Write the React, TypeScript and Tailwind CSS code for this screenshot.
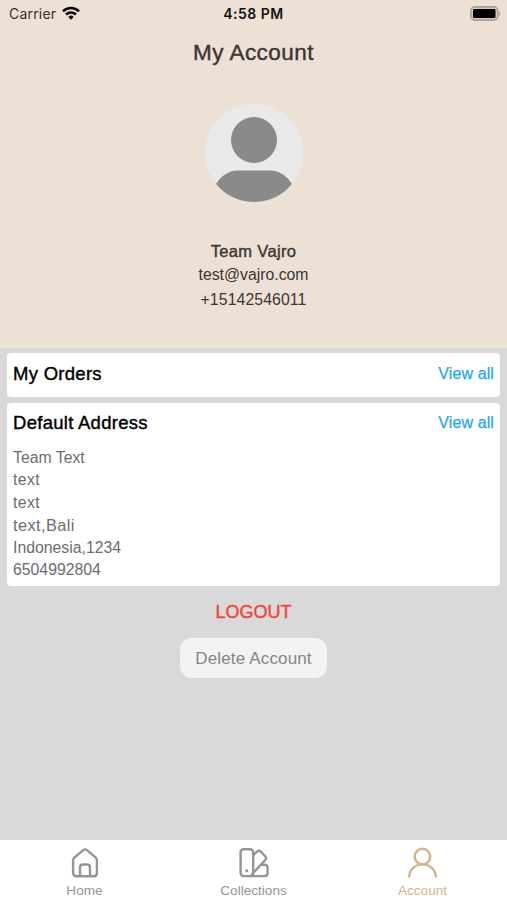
import React from "react";

function StatusBar() {
  return (
    <div className="grid h-7 grid-cols-3 items-center pl-[9px] pr-[6px] font-['Inter',sans-serif] text-[14px] leading-7">
      <div className="flex items-center gap-[6px] text-[#37302b]">
        <span className="tracking-[0.2px]">Carrier</span>
        <svg className="-mt-[2px]" width="18" height="14" viewBox="0 0 18 14" fill="none" stroke="#0b0908" strokeWidth="2.6">
          <path d="M1 5.3a11.3 11.3 0 0 1 16 0" />
          <path d="M4 8.5a7.1 7.1 0 0 1 10 0" />
          <path d="M6.3 10.9a3.8 3.8 0 0 1 5.4 0L9 13.7z" fill="#0b0908" stroke="none" />
        </svg>
      </div>
      <div className="-ml-[3px] text-center text-[14px] font-semibold tracking-[0.5px] text-[#16110f]">4:58 PM</div>
      <svg className="-mt-[2px] justify-self-end" width="31" height="15" viewBox="0 0 31 15">
        <rect x="0.9" y="0.9" width="27" height="13.2" rx="4" fill="#d5cbc1" stroke="#aaa098" strokeWidth="1.6" />
        <rect x="3" y="3" width="22.5" height="9" rx="1.2" fill="#000" />
        <path d="M29 5.2c1.7.8 1.7 3.8 0 4.6z" fill="#aaa098" />
      </svg>
    </div>
  );
}

function Avatar() {
  return (
    <svg className="mx-auto mt-[31px]" width="98" height="98" viewBox="0 0 98 98">
      <defs>
        <clipPath id="avatar">
          <circle cx="49" cy="49" r="49" />
        </clipPath>
      </defs>
      <g clipPath="url(#avatar)">
        <rect width="98" height="98" fill="#e9e9e9" />
        <circle cx="49" cy="36" r="23" fill="#8a8a8a" />
        <path d="M11 80C17 71 24 66.5 33 66.5H65C74 66.5 81 71 87 80L82 98H16z" fill="#8a8a8a" />
      </g>
    </svg>
  );
}

function CardHeader({ title }: { title: string }) {
  return (
    <div className="flex items-center justify-between leading-6">
      <h2 className="text-[18.5px] tracking-[0.28px] text-black [-webkit-text-stroke:0.4px_#000]">{title}</h2>
      <a className="text-[16px] tracking-[0.1px] text-[#24a8ed] [-webkit-text-stroke:0.25px_#24a8ed]">View all</a>
    </div>
  );
}

const address = [
  { line: "Team Text", spacing: "" },
  { line: "text", spacing: "tracking-[0.4px]" },
  { line: "text", spacing: "tracking-[0.4px]" },
  { line: "text,Bali", spacing: "text-[16.4px] tracking-[0.4px]" },
  { line: "Indonesia,1234", spacing: "" },
  { line: "6504992804", spacing: "" },
];

function HomeIcon() {
  return (
    <svg width="32" height="32" viewBox="0 0 32 32" fill="none" stroke="currentColor" strokeWidth="2.4" strokeLinejoin="round">
      <path d="M4.1 13.5c0-1.4.5-2.4 1.6-3.3l8.5-7.1c1.1-.9 2.5-.9 3.6 0l8.5 7.1c1.1.9 1.6 1.9 1.6 3.3V26c0 2-1.3 3.3-3.3 3.3H7.4c-2 0-3.3-1.3-3.3-3.3z" />
      <path d="M11 29v-8.6c0-1.8 1.1-2.9 2.9-2.9h4.2c1.8 0 2.9 1.1 2.9 2.9V29" />
    </svg>
  );
}

function CollectionsIcon() {
  return (
    <svg width="32" height="32" viewBox="0 0 32 32" fill="none" stroke="currentColor" strokeWidth="2.4" strokeLinejoin="round">
      <rect x="2.6" y="2.3" width="12.6" height="26.8" rx="3" />
      <path d="M15.2 8.2 19 4.6c1.3-1.2 2.7-1.2 3.9.1l4.3 4.6c1.2 1.3 1.1 2.6-.1 3.9L13.6 27.6" />
      <path d="M23 17.8h3.6c1.9 0 3 1.1 3 3V26c0 2-1.1 3.1-3 3.1H12" />
      <circle cx="8.8" cy="23.8" r="1.5" fill="currentColor" stroke="none" />
    </svg>
  );
}

function AccountIcon() {
  return (
    <svg width="32" height="32" viewBox="0 0 32 32" fill="none" stroke="currentColor" strokeWidth="2.4">
      <circle cx="15.5" cy="9.6" r="7.8" />
      <path d="M2 30.3C2.7 22.6 8 17.4 15.5 17.4S28.300 22.6 29 30.300" />
    </svg>
  );
}

const tabs = [
  { label: "Home", icon: <HomeIcon />, color: "text-[#959595]" },
  { label: "Collections", icon: <CollectionsIcon />, color: "text-[#959595]" },
  { label: "Account", icon: <AccountIcon />, color: "text-[#d2b48c]" },
];

export default function App() {
  return (
    <div className="flex h-[900px] w-[507px] flex-col overflow-hidden bg-[#d9d9d9] font-['Liberation_Sans',Arial,sans-serif]">
      <header className="h-[348px] shrink-0 bg-[#ede1d6] text-center text-[#3b3632]">
        <StatusBar />
        <h1 className="mt-[5px] text-[22.5px] leading-10 tracking-[0.45px] [-webkit-text-stroke:0.4px_#3b3632]">My Account</h1>
        <Avatar />
        <div className="mt-[37px]">
          <p className="text-[16.5px] leading-6 tracking-[0.35px] [-webkit-text-stroke:0.4px_#3b3632]">Team Vajro</p>
          <p className="text-[15.8px] leading-6">test@vajro.com</p>
          <p className="text-[15.8px] leading-[25px] tracking-[0.1px]">+15142546011</p>
        </div>
      </header>

      <main className="flex flex-1 flex-col px-[7px] pt-[5px]">
        <section className="h-[44px] rounded bg-white px-[6px] pt-[9px]">
          <CardHeader title="My Orders" />
        </section>
        <section className="mt-[6px] h-[183px] rounded bg-white px-[6px] pt-[8px]">
          <CardHeader title="Default Address" />
          <div className="mt-[12px] text-[15.8px] leading-[22.4px] text-[#6d6d6d]">
            {address.map(({ line, spacing }, i) => (
              <p key={i} className={spacing + " leading-[22.4px]"}>{line}</p>
            ))}
          </div>
        </section>
        <button className="mx-auto mt-[14px] text-[18px] leading-6 text-[#f04438] [-webkit-text-stroke:0.4px_#f04438]">LOGOUT</button>
        <button className="mx-auto mt-[14px] h-10 w-[147px] rounded-[12px] bg-[#f3f3f3] pt-[2px] text-[17px] tracking-[0.15px] text-[#858585]">
          Delete Account
        </button>
      </main>

      <nav className="grid h-[60px] shrink-0 grid-cols-3 bg-white">
        {tabs.map((tab) => (
          <div key={tab.label} className={`flex flex-col items-center pt-[7px] ${tab.color}`}>
            {tab.icon}
            <span className="mt-[4px] text-[13.6px] leading-4">{tab.label}</span>
          </div>
        ))}
      </nav>
    </div>
  );
}
